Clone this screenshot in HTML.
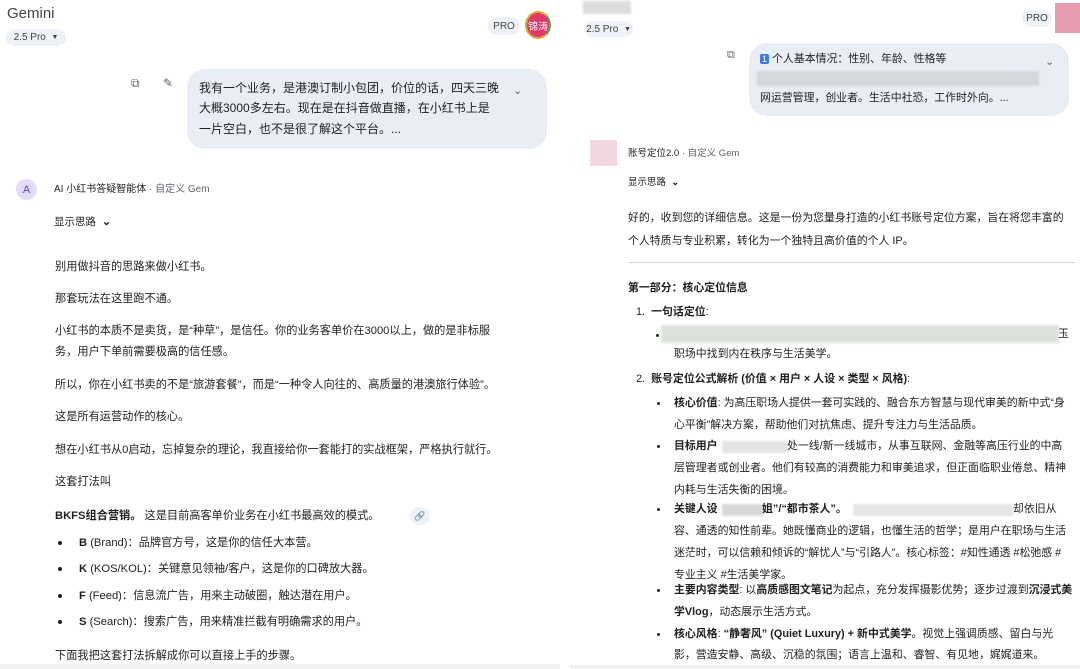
<!DOCTYPE html>
<html><head><meta charset="utf-8"><style>
*{margin:0;padding:0;box-sizing:border-box}
body{width:1080px;height:669px;overflow:hidden;background:#fff;position:relative;font-family:"Liberation Sans","Noto Sans CJK SC",sans-serif;color:#1f1f1f}
.t{position:absolute;white-space:nowrap;line-height:1}
.l{font-size:11.2px}
.r{font-size:10.9px}
b{font-weight:700}
.g{color:#5f6368}
.pill{position:absolute;background:#eef1f6;border-radius:12px;font-size:10px;color:#444;display:flex;align-items:center;justify-content:center}
.bub{position:absolute;background:#e9eef6;border-radius:18px}
.blur{position:absolute;background:#dde3dc;filter:blur(1px)}
.dot{position:absolute;width:4px;height:4px;border-radius:50%;background:#222}
</style></head><body>
<!-- LEFT -->
<div class="t" style="left:7px;top:6px;font-size:15px;color:#444">Gemini</div>
<div class="pill" style="left:6px;top:29px;width:60px;height:17px">2.5 Pro &nbsp;<span style="font-size:7px">▼</span></div>
<div class="pill" style="left:488px;top:17px;width:32px;height:18px">PRO</div>
<div style="position:absolute;left:525px;top:11px;width:26px;height:28px;border-radius:50%;border:2px solid #e8a33b;border-right-color:#4caf50;background:#e0386b;color:#fff;font-size:10px;display:flex;align-items:center;justify-content:center;overflow:hidden">锦涛</div>
<div class="t g" style="left:131px;top:77px;font-size:12px">⧉</div>
<div class="t g" style="left:163px;top:77px;font-size:12px">✎</div>
<div class="bub" style="left:187px;top:69px;width:360px;height:80px"></div>
<div class="t" style="left:199px;top:82px;font-size:12px">我有一个业务，是港澳订制小包团，价位的话，四天三晚</div>
<div class="t" style="left:199px;top:102px;font-size:12px">大概3000多左右。现在是在抖音做直播，在小红书上是</div>
<div class="t" style="left:199px;top:123px;font-size:12px">一片空白，也不是很了解这个平台。...</div>
<div class="t g" style="left:513px;top:86px;font-size:11px">⌄</div>
<div style="position:absolute;left:16px;top:179px;width:21px;height:21px;border-radius:50%;background:#e3dcfb;color:#5b3ee0;font-size:11px;display:flex;align-items:center;justify-content:center">A</div>
<div class="t" style="left:54px;top:185px;font-size:10px">AI 小红书答疑智能体 <span class="g">· 自定义 Gem</span></div>
<div class="t" style="left:54px;top:217px;font-size:10.5px">显示思路 &nbsp;<b style="font-size:11px">⌄</b></div>
<div class="t l" style="left:55px;top:262px">别用做抖音的思路来做小红书。</div>
<div class="t l" style="left:55px;top:294px">那套玩法在这里跑不通。</div>
<div class="t l" style="left:55px;top:326px">小红书的本质不是卖货，是“种草”，是信任。你的业务客单价在3000以上，做的是非标服</div>
<div class="t l" style="left:55px;top:347px">务，用户下单前需要极高的信任感。</div>
<div class="t l" style="left:55px;top:380px">所以，你在小红书卖的不是“旅游套餐”，而是“一种令人向往的、高质量的港澳旅行体验”。</div>
<div class="t l" style="left:55px;top:412px">这是所有运营动作的核心。</div>
<div class="t l" style="left:55px;top:445px">想在小红书从0启动，忘掉复杂的理论，我直接给你一套能打的实战框架，严格执行就行。</div>
<div class="t l" style="left:55px;top:477px">这套打法叫</div>
<div class="t l" style="left:55px;top:511px"><b>BKFS组合营销。</b> 这是目前高客单价业务在小红书最高效的模式。</div>
<div style="position:absolute;left:410px;top:507px;width:20px;height:18px;border-radius:9px;background:#eef1f6;color:#777;font-size:9px;text-align:center;line-height:18px">🔗</div>
<div class="dot" style="left:58px;top:541px"></div><div class="t l" style="left:79px;top:538px"><b>B</b> (Brand)：品牌官方号，这是你的信任大本营。</div>
<div class="dot" style="left:58px;top:567px"></div><div class="t l" style="left:79px;top:564px"><b>K</b> (KOS/KOL)：关键意见领袖/客户，这是你的口碑放大器。</div>
<div class="dot" style="left:58px;top:594px"></div><div class="t l" style="left:79px;top:591px"><b>F</b> (Feed)：信息流广告，用来主动破圈，触达潜在用户。</div>
<div class="dot" style="left:58px;top:620px"></div><div class="t l" style="left:79px;top:617px"><b>S</b> (Search)：搜索广告，用来精准拦截有明确需求的用户。</div>
<div class="t l" style="left:55px;top:651px">下面我把这套打法拆解成你可以直接上手的步骤。</div>
<div style="position:absolute;left:0;top:664px;width:560px;height:5px;background:#f1f1f1"></div>
<!-- RIGHT -->
<div class="blur" style="left:583px;top:1px;width:48px;height:13px;background:#ddd"></div>
<div class="pill" style="left:584px;top:21px;width:49px;height:16px">2.5 Pro &nbsp;<span style="font-size:7px">▼</span></div>
<div class="pill" style="left:1022px;top:10px;width:30px;height:17px">PRO</div>
<div style="position:absolute;left:1055px;top:3px;width:25px;height:30px;background:#e69aad"></div>
<div class="t g" style="left:727px;top:50px;font-size:11px">⧉</div>
<div class="bub" style="left:749px;top:43px;width:320px;height:73px"></div>
<div class="t r" style="left:760px;top:54px"><span style="background:#3b7dd8;color:#fff;font-size:9px;padding:0 2px;border-radius:2px">1</span> 个人基本情况：性别、年龄、性格等</div>
<div class="blur" style="left:757px;top:71px;width:282px;height:15px;background:#d3d8dd"></div>
<div class="t r" style="left:760px;top:93px">网运营管理，创业者。生活中社恐，工作时外向。...</div>
<div class="t g" style="left:1045px;top:57px;font-size:11px">⌄</div>
<div style="position:absolute;left:590px;top:140px;width:27px;height:26px;background:#f2d7de"></div>
<div class="t" style="left:628px;top:149px;font-size:9.5px">账号定位2.0 <span class="g">· 自定义 Gem</span></div>
<div class="t" style="left:628px;top:178px;font-size:9.5px">显示思路 &nbsp;<b>⌄</b></div>
<div class="t r" style="left:628px;top:213px">好的，收到您的详细信息。这是一份为您量身打造的小红书账号定位方案，旨在将您丰富的</div>
<div class="t r" style="left:628px;top:236px">个人特质与专业积累，转化为一个独特且高价值的个人 IP。</div>
<div style="position:absolute;left:628px;top:262px;width:447px;height:1px;background:#d6d6d6"></div>
<div class="t r" style="left:628px;top:283px"><b>第一部分：核心定位信息</b></div>
<div class="t r" style="left:636px;top:307px">1.&nbsp;&nbsp;<b>一句话定位</b>:</div>
<div class="dot" style="left:656px;top:334px;width:3px;height:3px"></div>
<div class="blur" style="left:661px;top:325px;width:398px;height:18px"></div>
<div class="t r" style="left:1058px;top:329px">玉</div>
<div class="t r" style="left:674px;top:349px">职场中找到内在秩序与生活美学。</div>
<div class="t r" style="left:636px;top:374px">2.&nbsp;&nbsp;<b>账号定位公式解析 (价值 × 用户 × 人设 × 类型 × 风格)</b>:</div>
<div class="dot" style="left:657px;top:402px;width:3px;height:3px"></div>
<div class="t r" style="left:674px;top:398px"><b>核心价值</b>: 为高压职场人提供一套可实践的、融合东方智慧与现代审美的新中式“身</div>
<div class="t r" style="left:674px;top:420px">心平衡”解决方案，帮助他们对抗焦虑、提升专注力与生活品质。</div>
<div class="dot" style="left:657px;top:445px;width:3px;height:3px"></div>
<div class="t r" style="left:674px;top:441px"><b>目标用户</b></div>
<div class="blur" style="left:722px;top:441px;width:66px;height:12px;background:#e4e4e4"></div>
<div class="t r" style="left:787px;top:441px">处一线/新一线城市，从事互联网、金融等高压行业的中高</div>
<div class="t r" style="left:674px;top:463px">层管理者或创业者。他们有较高的消费能力和审美追求，但正面临职业倦怠、精神</div>
<div class="t r" style="left:674px;top:485px">内耗与生活失衡的困境。</div>
<div class="dot" style="left:657px;top:508px;width:3px;height:3px"></div>
<div class="t r" style="left:674px;top:504px"><b>关键人设</b></div>
<div class="blur" style="left:722px;top:504px;width:42px;height:12px;background:#d8d8d8"></div>
<div class="t r" style="left:762px;top:504px"><b>姐”/“都市茶人”。</b></div>
<div class="blur" style="left:853px;top:504px;width:160px;height:12px;background:#e6e6e6"></div>
<div class="t r" style="left:1013px;top:504px">却依旧从</div>
<div class="t r" style="left:674px;top:526px">容、通透的知性前辈。她既懂商业的逻辑，也懂生活的哲学；是用户在职场与生活</div>
<div class="t r" style="left:674px;top:548px">迷茫时，可以信赖和倾诉的“解忧人”与“引路人”。核心标签：#知性通透 #松弛感 #</div>
<div class="t r" style="left:674px;top:570px">专业主义 #生活美学家。</div>
<div class="dot" style="left:657px;top:589px;width:3px;height:3px"></div>
<div class="t r" style="left:674px;top:585px"><b>主要内容类型</b>: 以<b>高质感图文笔记</b>为起点，充分发挥摄影优势；逐步过渡到<b>沉浸式美</b></div>
<div class="t r" style="left:674px;top:607px"><b>学Vlog</b>，动态展示生活方式。</div>
<div class="dot" style="left:657px;top:633px;width:3px;height:3px"></div>
<div class="t r" style="left:674px;top:629px"><b>核心风格</b>: <b>“静奢风” (Quiet Luxury) + 新中式美学</b>。视觉上强调质感、留白与光</div>
<div class="t r" style="left:674px;top:650px">影，营造安静、高级、沉稳的氛围；语言上温和、睿智、有见地，娓娓道来。</div>
<div style="position:absolute;left:570px;top:665px;width:510px;height:4px;background:#f1f1f1"></div>
</body></html>
